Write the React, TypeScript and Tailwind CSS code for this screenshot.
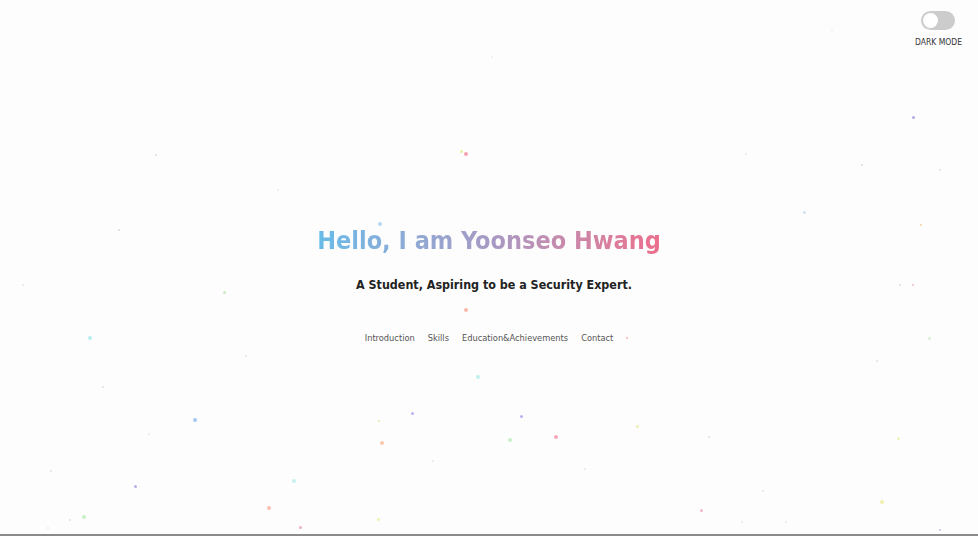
import { useState } from "react";

const dots: [number, number, number, string][] = [
  [466, 154, 4, "#f5a3b5"], [461, 151, 3, "#e6f0a0"], [156, 155, 2, "#dddddd"],
  [913, 117, 3, "#b9a8e0"], [862, 165, 2, "#dddddd"], [940, 170, 2, "#e0e0e0"],
  [746, 154, 2, "#e6e6e6"], [278, 190, 2, "#e0f0e0"], [804, 212, 3, "#cfe3f5"],
  [921, 225, 2, "#f0d0a0"], [380, 224, 4, "#b8d8f5"], [119, 230, 2, "#dddddd"],
  [224, 292, 3, "#c8ecc0"], [23, 285, 2, "#e6e6e6"], [466, 310, 4, "#f7b8a8"],
  [900, 285, 2, "#dddddd"], [913, 285, 2, "#e8c0c0"], [90, 338, 4, "#b8eef0"],
  [246, 356, 2, "#e0e0e0"], [627, 338, 2, "#f5b0b0"], [929, 338, 3, "#d8f0d8"],
  [478, 377, 4, "#c0f0f0"], [103, 387, 2, "#dde"], [877, 361, 2, "#e0e0e0"],
  [412, 413, 3, "#c0b0f0"], [521, 416, 3, "#b8b0f0"], [195, 420, 4, "#a8c8f0"],
  [382, 443, 4, "#f8c8b0"], [379, 421, 2, "#d8f0b0"], [510, 440, 4, "#c8f0c8"],
  [556, 437, 4, "#f5a8b8"], [637, 426, 3, "#f0f0b0"], [709, 437, 2, "#dddddd"],
  [898, 438, 3, "#f0f0c0"], [149, 434, 2, "#e6e6e6"], [51, 471, 2, "#d8e8d8"],
  [135, 486, 3, "#b8b0e8"], [294, 481, 4, "#c8f0f0"], [433, 461, 2, "#e6e6e6"],
  [585, 469, 2, "#e6e6e6"], [269, 508, 4, "#f8c0b0"], [300, 527, 3, "#e8b0c0"],
  [378, 519, 3, "#f0f0b0"], [84, 517, 4, "#c8f0c8"], [48, 528, 2, "#e0f0e0"],
  [701, 510, 3, "#f0b8c8"], [742, 522, 2, "#e6e6e6"], [763, 491, 2, "#e6e6e6"],
  [882, 502, 4, "#f0f0b0"], [786, 522, 2, "#e6e6e6"], [940, 530, 2, "#c0c0f0"],
  [832, 30, 2, "#eeeeee"], [492, 57, 2, "#eeeeee"], [70, 520, 2, "#e0e0e0"],
];

export default function App() {
  const [dark, setDark] = useState(false);
  return (
    <div className="relative flex h-[536px] w-full flex-col overflow-hidden border-b-2 border-[#8a8a8a] bg-[#fdfdfd] font-['DejaVu_Sans_Condensed','DejaVu_Sans',sans-serif] font-stretch-condensed">
      {dots.map(([x, y, s, c], i) => (
        <span
          key={i}
          className="absolute rounded-full"
          style={{ left: x - s / 2, top: y - s / 2, width: s, height: s, background: c }}
        />
      ))}

      <div className="relative flex justify-end pr-4 pt-[11px]">
        <div className="flex flex-col items-center gap-[6px]">
          <button
            onClick={() => setDark(!dark)}
            className="flex h-[19px] w-[34px] items-center rounded-full bg-[#cccccc] px-[2px]"
          >
            <span className="h-[15px] w-[15px] rounded-full bg-white" />
          </button>
          <span className="text-[8.5px] text-[#333]">DARK MODE</span>
        </div>
      </div>

      <div className="relative flex flex-col items-center pt-[174px]">
        <h1 className="bg-gradient-to-r from-[#66bbe8] via-[#a59ac4] to-[#ec6e8c] bg-clip-text text-[25px] font-bold leading-[36px] text-transparent">
          Hello, I am Yoonseo Hwang
        </h1>
        <p className="ml-[10px] mt-[17px] text-[12.4px] font-bold leading-[18px] text-[#222]">
          A Student, Aspiring to be a Security Expert.
        </p>
        <nav className="mt-[37px] flex gap-[13px] text-[9.2px] leading-[14px] text-[#555]">
          <a>Introduction</a>
          <a>Skills</a>
          <a>Education&amp;Achievements</a>
          <a>Contact</a>
        </nav>
      </div>
    </div>
  );
}
